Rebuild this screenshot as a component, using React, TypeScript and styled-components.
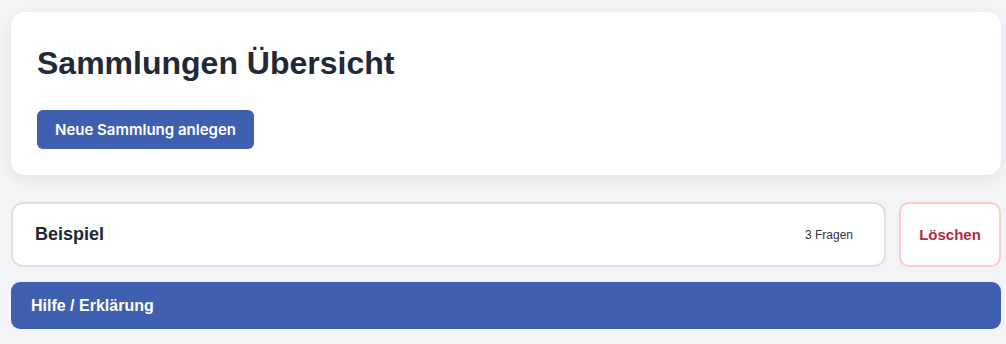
import React from "react";
import styled, { createGlobalStyle } from "styled-components";

const GlobalStyle = createGlobalStyle`
  html, body {
    margin: 0;
    padding: 0;
    background: #f3f4f8;
    font-family: "Liberation Sans", Arial, sans-serif;
  }
`;

const Page = styled.div`
  padding: 12px 5px 14px 11px;
  display: flex;
  flex-direction: column;
`;

const HeaderCard = styled.section`
  background: #ffffff;
  border-radius: 14px;
  box-shadow: 0 4px 14px rgba(30, 41, 80, 0.07);
  padding: 32px 26px 26px;
  margin-bottom: 27px;
`;

const Title = styled.h1`
  margin: 0 0 28px;
  font-size: 32px;
  line-height: 38px;
  font-weight: 700;
  color: #1f2937;
`;

const PrimaryButton = styled.button`
  display: inline-block;
  border: none;
  border-radius: 6px;
  background: #3f5fb1;
  color: #ffffff;
  font-family: "Inter", "Liberation Sans", sans-serif;
  font-weight: 600;
  font-size: 15px;
  line-height: 19px;
  padding: 10px 18px;
  cursor: pointer;
`;

const Row = styled.div`
  display: flex;
  gap: 13px;
  margin-bottom: 15px;
`;

const CollectionItem = styled.div`
  flex: 1;
  height: 65px;
  box-sizing: border-box;
  display: flex;
  align-items: center;
  justify-content: space-between;
  background: #ffffff;
  border: 2px solid #dce1e9;
  border-radius: 12px;
  padding: 0 31px 0 22px;
`;

const ItemName = styled.span`
  font-size: 18px;
  font-weight: 700;
  color: #1f2937;
`;

const ItemCount = styled.span`
  font-size: 12px;
  color: #2f3440;
`;

const DeleteButton = styled.button`
  width: 102px;
  height: 65px;
  box-sizing: border-box;
  background: #ffffff;
  border: 2px solid #fecaca;
  border-radius: 10px;
  color: #b32a3e;
  font-family: "Liberation Sans", Arial, sans-serif;
  font-size: 15px;
  font-weight: 700;
  cursor: pointer;
`;

const HelpBar = styled.button`
  width: 100%;
  height: 47px;
  border: none;
  border-radius: 9px;
  background: #3f5fb1;
  color: #ffffff;
  text-align: left;
  padding: 0 20px;
  font-family: "Liberation Sans", Arial, sans-serif;
  font-size: 16px;
  font-weight: 700;
  cursor: pointer;
`;

export default function App() {
  return (
    <>
      <GlobalStyle />
      <Page>
        <HeaderCard>
          <Title>Sammlungen Übersicht</Title>
          <PrimaryButton>Neue Sammlung anlegen</PrimaryButton>
        </HeaderCard>
        <Row>
          <CollectionItem>
            <ItemName>Beispiel</ItemName>
            <ItemCount>3 Fragen</ItemCount>
          </CollectionItem>
          <DeleteButton>Löschen</DeleteButton>
        </Row>
        <HelpBar>Hilfe / Erklärung</HelpBar>
      </Page>
    </>
  );
}
